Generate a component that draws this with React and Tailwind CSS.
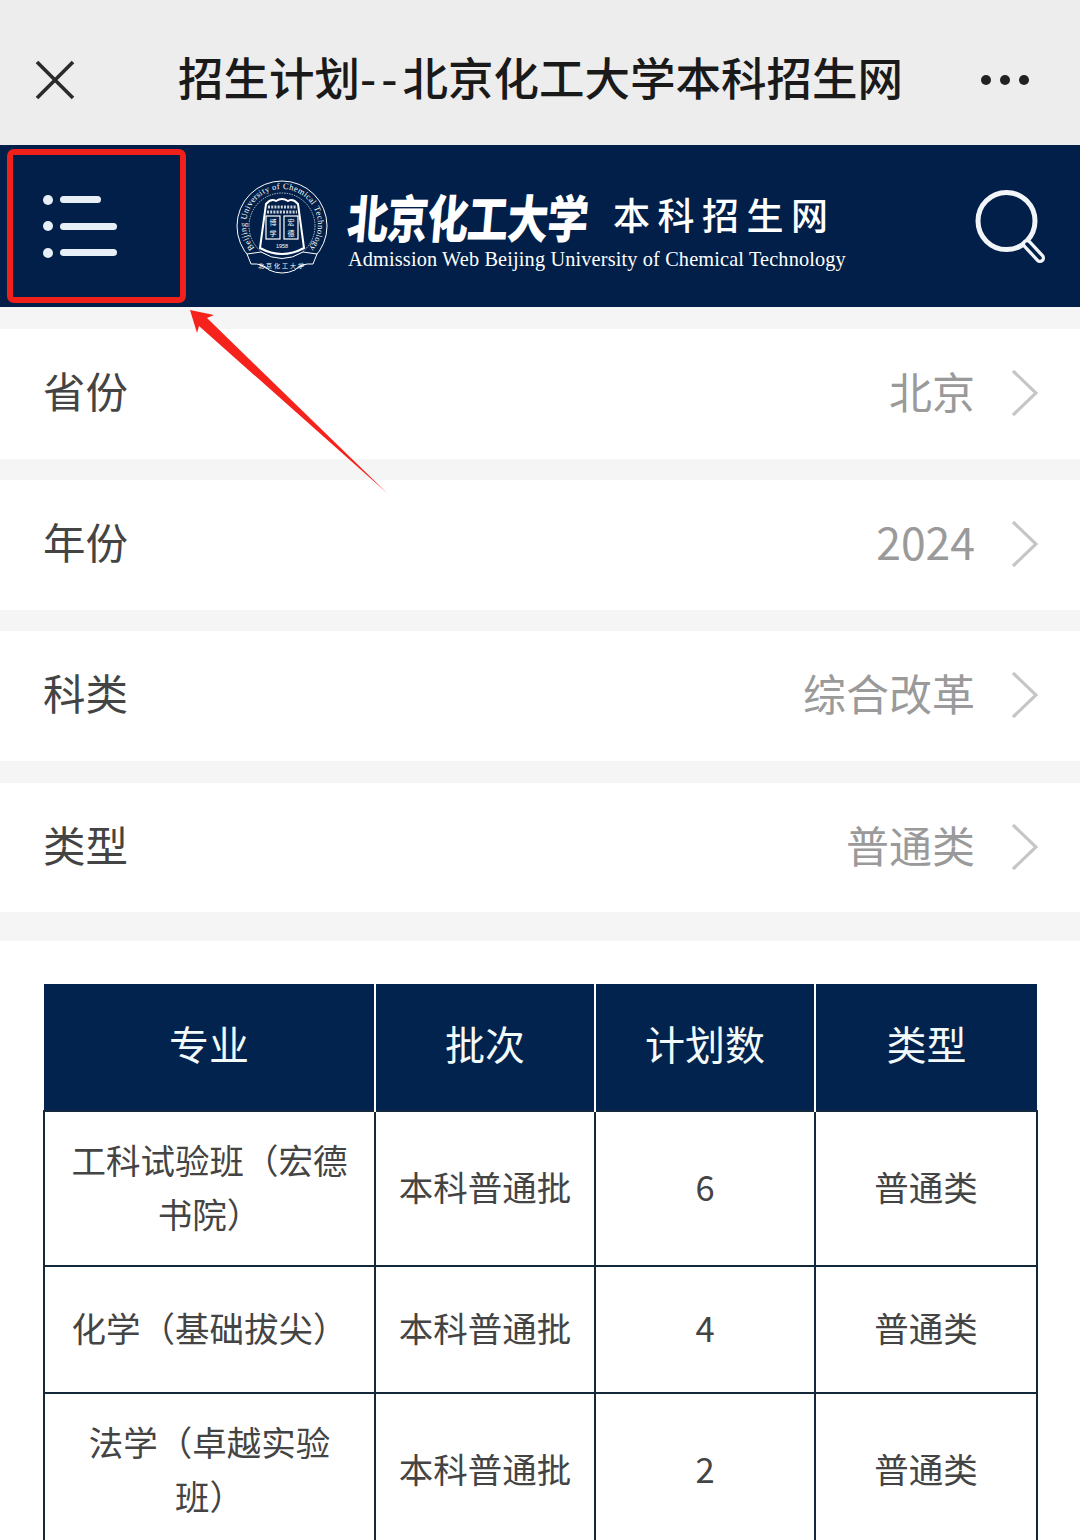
const CJK = '"Noto Sans CJK SC", sans-serif'

const filters = [
  { label: '省份', value: '北京', h: 'h-[130px]', gap: 'h-[21px]' },
  { label: '年份', value: '2024', h: 'h-[130px]', gap: 'h-[21px]' },
  { label: '科类', value: '综合改革', h: 'h-[130px]', gap: 'h-[22px]' },
  { label: '类型', value: '普通类', h: 'h-[129px]', gap: 'h-[29px]' },
]

const rows = [
  { name: ['工科试验班（宏德', '书院）'], batch: '本科普通批', count: 6, type: '普通类', h: 'h-[155px]' },
  { name: ['化学（基础拔尖）'], batch: '本科普通批', count: 4, type: '普通类', h: 'h-[127px]' },
  { name: ['法学（卓越实验', '班）'], batch: '本科普通批', count: 2, type: '普通类', h: 'h-[155px]' },
]

const Seal = () => (
  <svg width="98" height="98" viewBox="0 0 98 98" className="shrink-0" fill="none" stroke="#fff">
    <defs>
      <path id="sealArc" d="M21.4 68.1 A36 36 0 1 1 76.6 68.1" />
    </defs>
    <circle cx="49" cy="46" r="45" strokeWidth="1" />
    <circle cx="49" cy="46" r="33" strokeWidth="0.7" strokeDasharray="1.5 1" />
    <text fontSize="8.5" fill="#fff" stroke="none" fontFamily="Liberation Serif, serif">
      <textPath href="#sealArc" textLength="163">Beijing University of Chemical Technology</textPath>
    </text>
    <path d="M33 24 Q38 18 43 21 Q49 17 55 21 Q60 18 65 24 L71 68 Q49 80 27 68 Z" strokeWidth="2" />
    <path d="M35 27 H63 M34 32 H64" strokeWidth="3" strokeDasharray="2 1.2" opacity="0.8" />
    <rect x="33" y="36" width="14" height="23" strokeWidth="1.2" />
    <rect x="51" y="36" width="14" height="23" strokeWidth="1.2" />
    <g fontSize="7" fill="#fff" stroke="none" textAnchor="middle" fontFamily={CJK}>
      <text x="40" y="45">博</text>
      <text x="40" y="55.5">学</text>
      <text x="58" y="45">宏</text>
      <text x="58" y="55.5">德</text>
    </g>
    <text x="49" y="68" fontSize="5.5" fill="#fff" stroke="none" textAnchor="middle" fontFamily="Liberation Sans, sans-serif">1958</text>
    <path d="M14 74 L28 72 Q49 85 70 72 L84 74 L80 84 Q68 83 62 90 Q49 96 36 90 Q30 83 18 84 Z" fill="#011f48" strokeWidth="1" />
    <text x="49" y="88" fontSize="6" fill="#fff" stroke="none" textAnchor="middle" fontFamily={CJK} letterSpacing="2">北京化工大学</text>
  </svg>
)

const Cell = ({ children }) => (
  <td className="border-2 border-[#14283c] pb-[6px] text-center align-middle text-[34.5px] leading-[54px] text-[#444] [text-spacing-trim:space-all]">{children}</td>
)

export default function App() {
  return (
    <div className="relative h-[1540px] w-[1080px] overflow-hidden bg-white" style={{ fontFamily: CJK }}>
      <div className="flex h-[145px] items-center justify-between bg-[#ededed] pl-[34px] pr-[51px] pt-[15px]">
        <svg width="42" height="42" viewBox="0 0 42 42" stroke="#2b2b2b" strokeWidth="3.6">
          <path d="M3 3 L39 39 M39 3 L3 39" />
        </svg>
        <div className="mb-[6px] ml-[24px] text-[45.5px] font-medium leading-none text-[#1a1a1a]">
          招生计划<span className="tracking-[5px]">--</span>北京化工大学本科招生网
        </div>
        <div className="flex gap-[9px]">
          <span className="h-[10px] w-[10px] rounded-full bg-[#222]" />
          <span className="h-[10px] w-[10px] rounded-full bg-[#222]" />
          <span className="h-[10px] w-[10px] rounded-full bg-[#222]" />
        </div>
      </div>

      <header className="flex h-[162px] items-center bg-[#011f48] pl-[43px] pr-[34px] text-white">
        <div className="flex w-[74px] flex-col gap-[16.5px]">
          {[41, 57, 57].map((w, i) => (
            <div key={i} className="flex items-center gap-[7px]">
              <span className="h-[10px] w-[10px] rounded-full bg-[#e8eef6]" />
              <span className="h-[7px] rounded-full bg-[#e8eef6]" style={{ width: w }} />
            </div>
          ))}
        </div>
        <div className="ml-[116px] mt-[6px]">
          <Seal />
        </div>
        <div className="ml-[17px] mt-[2px] flex flex-col gap-[3px]">
          <div className="flex items-center">
            <span className="inline-block origin-center -skew-x-6 scale-y-125 text-[41px] font-black leading-[60px] tracking-[-1px]">北京化工大学</span>
            <span className="mb-[1px] ml-[25px] text-[37px] font-medium leading-[60px] tracking-[7.5px]">本科招生网</span>
          </div>
          <div className="whitespace-nowrap text-[20.3px] leading-[22px] tracking-[0.15px]" style={{ fontFamily: '"Liberation Serif", serif' }}>
            Admission Web Beijing University of Chemical Technology
          </div>
        </div>
        <svg className="ml-auto" width="74" height="76" viewBox="0 0 74 76" fill="none" stroke="#f2f5f8">
          <circle cx="34.5" cy="33" r="28.5" strokeWidth="5" />
          <path d="M55 56 L68 70" strokeWidth="10" strokeLinecap="round" />
          <path d="M55 56 L68 70" strokeWidth="3.5" stroke="#011f48" strokeLinecap="round" />
        </svg>
      </header>

      <div className="h-[22px] bg-[#f5f5f5]" />
      {filters.map((f) => (
        <div key={f.label}>
          <div className={`flex items-center bg-white pl-[43px] pr-[42px] ${f.h}`}>
            <span className="mb-[7px] text-[42.5px] leading-none text-[#444]">{f.label}</span>
            <span className={`mb-[7px] ml-auto leading-none text-[#9a9a9a] ${f.value === '2024' ? 'text-[44.5px]' : 'text-[43px]'}`}>{f.value}</span>
            <svg className="mb-[2px] ml-[36px]" width="27" height="48" viewBox="0 0 27 48" fill="none" stroke="#c6c6c6" strokeWidth="3.2">
              <path d="M2 2 L25 24 L2 46" />
            </svg>
          </div>
          <div className={`bg-[#f5f5f5] ${f.gap}`} />
        </div>
      ))}

      <div className="px-[43px] pt-[43px]">
        <table className="w-[993px] table-fixed border-collapse">
          <colgroup>
            <col className="w-[331px]" />
            <col className="w-[220px]" />
            <col className="w-[220px]" />
            <col className="w-[222px]" />
          </colgroup>
          <thead>
            <tr className="h-[127px] bg-[#03234f] text-[40px] text-[#f2fafa]">
              {['专业', '批次', '计划数', '类型'].map((h, i) => (
                <th key={h} className={`pb-[8px] font-normal ${i < 3 ? 'border-r-2 border-white' : ''}`}>{h}</th>
              ))}
            </tr>
          </thead>
          <tbody>
            {rows.map((r) => (
              <tr key={r.batch + r.count} className={r.h}>
                <Cell>
                  {r.name.map((line) => (
                    <div key={line}>{line}</div>
                  ))}
                </Cell>
                <Cell>{r.batch}</Cell>
                <Cell>{r.count}</Cell>
                <Cell>{r.type}</Cell>
              </tr>
            ))}
          </tbody>
        </table>
      </div>

      {/* red annotation over the screenshot */}
      <div className="absolute left-[7px] top-[149px] h-[154px] w-[179px] rounded-[7px] border-[6px] border-[#f0201a]" />
      <svg className="absolute left-[185px] top-[305px]" width="210" height="195" viewBox="0 0 210 195">
        <path d="M5 5 L29 10 L22 13 L202 188 L14 21 L12 28 Z" fill="#f5231b" />
      </svg>
    </div>
  )
}
